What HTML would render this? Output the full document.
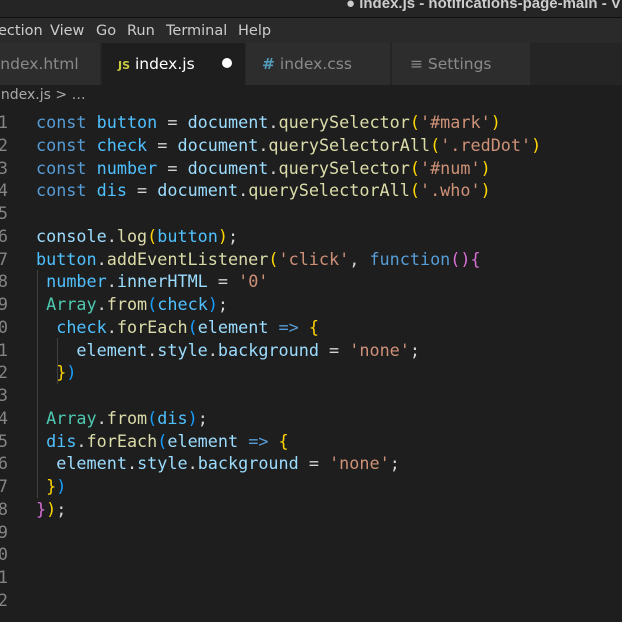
<!DOCTYPE html>
<html><head><style>
body{margin:0;width:622px;height:622px;overflow:hidden;background:#1e1e1e;position:relative;font-family:"Liberation Sans","DejaVu Sans",sans-serif}
.title{position:absolute;top:0;left:0;width:622px;height:17px;background:#252526;color:#ccc;font-size:15px;font-weight:bold;line-height:10px;overflow:hidden;border-bottom:1px solid #111;white-space:nowrap}
.menu{position:absolute;top:18px;left:0;width:622px;height:26px;background:#2a2a2a;color:#ccc;font-size:14.5px;line-height:26px;font-family:"DejaVu Sans",sans-serif}
.tabs{position:absolute;top:43px;left:0;width:622px;height:42px;background:#252526}
.tab{position:absolute;top:0;height:42px;background:#2d2d2d;color:#8a8a8a;font-size:15.5px;line-height:42px;font-family:"DejaVu Sans",sans-serif;white-space:nowrap;overflow:hidden}
.crumb{position:absolute;top:87px;left:0;color:#a9a9a9;font-size:14px;font-family:"DejaVu Sans",sans-serif}
.code{position:absolute;top:111px;left:0;font-family:"DejaVu Sans Mono",monospace;font-size:16.8px;line-height:22.76px;color:#d4d4d4;white-space:pre}
.ln{position:absolute;left:-22px;width:30px;text-align:right;color:#858585}
.l{position:absolute;left:36px}
.k{color:#569cd6}.v{color:#4fc1ff}.f{color:#dcdcaa}.s{color:#ce9178}.y{color:#ffd700}.p{color:#da70d6}.b{color:#179fff}.c{color:#4ec9b0}.w{color:#9cdcfe}
.guide{position:absolute;left:37px;width:1px;background:#404040}
</style></head><body>
<div class="title"><span style="position:absolute;left:346px;top:-1px">● index.js - notifications-page-main - V</span></div>
<div class="menu"><span style="position:absolute;left:-2px">ection</span><span style="position:absolute;left:50px">View</span><span style="position:absolute;left:96px">Go</span><span style="position:absolute;left:127px">Run</span><span style="position:absolute;left:166px">Terminal</span><span style="position:absolute;left:238px">Help</span></div>
<div class="tabs">
<div class="tab" style="left:0;width:100px"><span style="margin-left:-4px">index.html</span></div>
<div class="tab" style="left:102px;width:143px;background:#1e1e1e;color:#fff"><span style="color:#cbcb41;font-size:11px;font-weight:bold;margin-left:16px">JS</span> index.js<span style="position:absolute;left:120px;top:15px;width:10px;height:10px;border-radius:50%;background:#fff"></span></div>
<div class="tab" style="left:246px;width:144px"><span style="color:#519aba;font-weight:bold;margin-left:16px">#</span> index.css</div>
<div class="tab" style="left:392px;width:138px"><span style="margin-left:18px">≡</span> Settings</div>
</div>
<div class="crumb"><span style="margin-left:-3px">index.js &gt; …</span></div>
<div class="guide" style="top:270px;height:228px"></div>
<div class="guide" style="top:338px;height:46px;left:57px"></div>
<div class="code">
<div class="ln" style="top:0">1</div><div class="ln" style="top:22.76px">2</div><div class="ln" style="top:45.5px">3</div><div class="ln" style="top:68.3px">4</div><div class="ln" style="top:91px">5</div><div class="ln" style="top:113.8px">6</div><div class="ln" style="top:136.6px">7</div><div class="ln" style="top:159.3px">8</div><div class="ln" style="top:182px">9</div><div class="ln" style="top:204.8px">10</div><div class="ln" style="top:227.6px">11</div><div class="ln" style="top:250.4px">12</div><div class="ln" style="top:273.1px">13</div><div class="ln" style="top:295.9px">14</div><div class="ln" style="top:318.6px">15</div><div class="ln" style="top:341.4px">16</div><div class="ln" style="top:364.2px">17</div><div class="ln" style="top:386.9px">18</div><div class="ln" style="top:409.7px">19</div><div class="ln" style="top:432.4px">20</div><div class="ln" style="top:455.2px">21</div><div class="ln" style="top:478px">22</div>
<div class="l" style="top:0"><span class="k">const</span> <span class="v">button</span> = <span class="w">document</span>.<span class="f">querySelector</span><span class="y">(</span><span class="s">'#mark'</span><span class="y">)</span></div>
<div class="l" style="top:22.76px"><span class="k">const</span> <span class="v">check</span> = <span class="w">document</span>.<span class="f">querySelectorAll</span><span class="y">(</span><span class="s">'.redDot'</span><span class="y">)</span></div>
<div class="l" style="top:45.5px"><span class="k">const</span> <span class="v">number</span> = <span class="w">document</span>.<span class="f">querySelector</span><span class="y">(</span><span class="s">'#num'</span><span class="y">)</span></div>
<div class="l" style="top:68.3px"><span class="k">const</span> <span class="v">dis</span> = <span class="w">document</span>.<span class="f">querySelectorAll</span><span class="y">(</span><span class="s">'.who'</span><span class="y">)</span></div>
<div class="l" style="top:113.8px"><span class="w">console</span>.<span class="f">log</span><span class="y">(</span><span class="v">button</span><span class="y">)</span>;</div>
<div class="l" style="top:136.6px"><span class="v">button</span>.<span class="f">addEventListener</span><span class="y">(</span><span class="s">'click'</span>, <span class="k">function</span><span class="p">(){</span></div>
<div class="l" style="top:159.3px"> <span class="v">number</span>.<span class="w">innerHTML</span> = <span class="s">'0'</span></div>
<div class="l" style="top:182px"> <span class="c">Array</span>.<span class="f">from</span><span class="b">(</span><span class="v">check</span><span class="b">)</span>;</div>
<div class="l" style="top:204.8px">  <span class="v">check</span>.<span class="f">forEach</span><span class="b">(</span><span class="w">element</span> <span class="k">=&gt;</span> <span class="y">{</span></div>
<div class="l" style="top:227.6px">    <span class="w">element</span>.<span class="w">style</span>.<span class="w">background</span> = <span class="s">'none'</span>;</div>
<div class="l" style="top:250.4px">  <span class="y">}</span><span class="b">)</span></div>
<div class="l" style="top:295.9px"> <span class="c">Array</span>.<span class="f">from</span><span class="b">(</span><span class="v">dis</span><span class="b">)</span>;</div>
<div class="l" style="top:318.6px"> <span class="v">dis</span>.<span class="f">forEach</span><span class="b">(</span><span class="w">element</span> <span class="k">=&gt;</span> <span class="y">{</span></div>
<div class="l" style="top:341.4px">  <span class="w">element</span>.<span class="w">style</span>.<span class="w">background</span> = <span class="s">'none'</span>;</div>
<div class="l" style="top:364.2px"> <span class="y">}</span><span class="b">)</span></div>
<div class="l" style="top:386.9px"><span class="p">}</span><span class="y">)</span>;</div>
</div>
</body></html>
